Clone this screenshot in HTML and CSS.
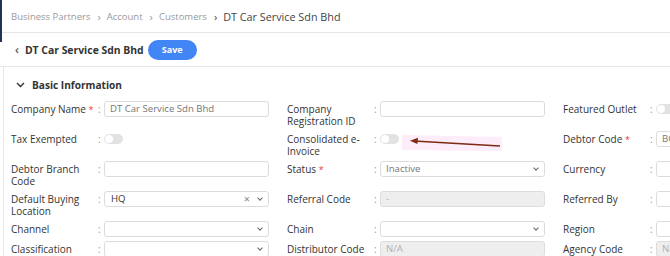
FILE: index.html
```html
<!DOCTYPE html>
<html lang="en">
<head>
  <meta charset="utf-8">
  <title>DT Car Service Sdn Bhd</title>
  <link rel="stylesheet" href="styles.css">
</head>
<body>
  <div class="page">
    <nav class="crumbs">
      <span>Business Partners</span><span class="sep">›</span>
      <span>Account</span><span class="sep">›</span>
      <span>Customers</span><span class="sep dark">›</span>
      <span class="current">DT Car Service Sdn Bhd</span>
    </nav>

    <div class="titlebar">
      <span class="back">‹</span>
      <h1>DT Car Service Sdn Bhd</h1>
      <button class="btn">Save</button>
    </div>

    <section class="card">
      <h2 class="section-title">
        <svg width="9" height="6" viewBox="0 0 9 6"><path d="M1 1l3.5 3.5L8 1" fill="none" stroke="#333" stroke-width="1.4"/></svg>
        Basic Information
      </h2>

      <div class="fields">
        <div class="field"><label class="req">Company Name <i>*</i></label><span class="colon">:</span><div class="input">DT Car Service Sdn Bhd</div></div>
        <div class="field"><label>Company Registration ID</label><span class="colon">:</span><div class="input"></div></div>
        <div class="field"><label>Featured Outlet</label><span class="colon">:</span><div><span class="toggle"></span></div></div>

        <div class="field"><label>Tax Exempted</label><span class="colon">:</span><div><span class="toggle"></span></div></div>
        <div class="field"><label>Consolidated e&#8209;<br>Invoice</label><span class="colon">:</span><div><span class="toggle"></span></div></div>
        <div class="field"><label class="req">Debtor Code <i>*</i></label><span class="colon">:</span><div class="input">BC</div></div>

        <div class="field"><label>Debtor Branch Code</label><span class="colon">:</span><div class="input"></div></div>
        <div class="field"><label class="req">Status <i>*</i></label><span class="colon">:</span><div class="input select">Inactive<span class="caret"></span></div></div>
        <div class="field"><label>Currency</label><span class="colon">:</span><div class="input"></div></div>

        <div class="field"><label>Default Buying Location</label><span class="colon">:</span><div class="input select dark">HQ<span class="clear">×</span><span class="caret"></span></div></div>
        <div class="field"><label>Referral Code</label><span class="colon">:</span><div class="input disabled">-</div></div>
        <div class="field"><label>Referred By</label><span class="colon">:</span><div class="input"></div></div>

        <div class="field"><label>Channel</label><span class="colon">:</span><div class="input select"><span class="caret"></span></div></div>
        <div class="field"><label>Chain</label><span class="colon">:</span><div class="input select"><span class="caret"></span></div></div>
        <div class="field"><label>Region</label><span class="colon">:</span><div class="input"></div></div>

        <div class="field"><label>Classification</label><span class="colon">:</span><div class="input select"><span class="caret"></span></div></div>
        <div class="field"><label>Distributor Code</label><span class="colon">:</span><div class="input disabled">N/A</div></div>
        <div class="field"><label>Agency Code</label><span class="colon">:</span><div class="input disabled">N/A</div></div>
      </div>
    </section>

    <!-- annotation arrow drawn over the form -->
    <svg class="annotation" width="110" height="24" viewBox="0 0 110 24">
      <path d="M0 3 L100 5 L100 19 L0 18 Z" fill="#fdeaf8" opacity=".9"/>
      <path d="M98 14 L12 9" stroke="#7c2a12" stroke-width="1.6" fill="none"/>
      <path d="M8 8.8 L16 5.8 L15.4 12 Z" fill="#7c2a12"/>
    </svg>
  </div>
</body>
</html>
```

FILE: styles.css
```css
:root {
  --text: #333;
  --muted: #9a9a9a;
  --line: #e6e6e6;
  --accent: #4285f4;
  --navy: #1f3553;
}
* { box-sizing: border-box; margin: 0; padding: 0; }
html, body { overflow: hidden; }
body {
  font-family: 'Open Sans', sans-serif;
  font-size: 10px;
  color: var(--text);
  background: #fff;
}
.page {
  position: relative;
  width: 900px;
}
/* dark edge of the collapsed sidebar */
.page::before {
  content: '';
  position: absolute;
  left: 0; top: 0;
  width: 2px; height: 42px;
  background: var(--navy);
}
.crumbs {
  height: 33px;
  display: flex;
  align-items: center;
  padding-left: 11px;
  border-bottom: 1px solid var(--line);
  color: var(--muted);
  font-size: 9.5px;
}
.crumbs .sep {
  margin: 0 6px 0 7px;
  font-size: 11px;
}
.crumbs .sep.dark { color: #444; }
.crumbs .current {
  color: #444;
  font-size: 10.8px;
}
.titlebar {
  height: 34px;
  display: flex;
  align-items: center;
  padding-left: 15px;
  border-bottom: 1px solid var(--line);
}
.back {
  font-size: 13px;
  margin-right: 6px;
  margin-top: -2px;
}
.titlebar h1 {
  font-size: 10.4px;
  font-weight: 700;
  margin-right: 4px;
}
.btn {
  font-family: inherit;
  font-size: 9px;
  font-weight: 700;
  color: #fff;
  background: var(--accent);
  border: 0;
  border-radius: 10px;
  width: 49px;
  height: 20px;
}
.card {
  margin-left: 3px;
  border-left: 1px solid var(--line);
  padding-top: 10px;
}
.section-title {
  display: flex;
  align-items: center;
  gap: 7px;
  padding-left: 12px;
  font-size: 10.1px;
  font-weight: 700;
  height: 16px;
  margin-bottom: 8px;
}
.fields {
  display: grid;
  grid-template-columns: repeat(3, 258px);
  column-gap: 18px;
  row-gap: 4px;
  padding-left: 7px;
}
.field {
  display: grid;
  grid-template-columns: 87px 6px 1fr;
  align-items: start;
}
.field label {
  line-height: 12px;
  padding-top: 2px;
  padding-right: 2px;
}
.field label.req { white-space: nowrap; }
.field label i {
  font-style: normal;
  color: #e53935;
  font-size: 9px;
}
.colon {
  color: var(--muted);
  line-height: 12px;
  padding-top: 2px;
}
.input {
  position: relative;
  height: 16px;
  border: 1px solid #dcdcdc;
  border-radius: 3px;
  padding-left: 5px;
  line-height: 14px;
  color: #777;
  font-size: 9.6px;
}
.input.dark { color: #333; padding-left: 6px; }
.input.disabled {
  background: #eee;
  color: #b0b0b0;
}
.caret {
  position: absolute;
  right: 6px; top: 4px;
  width: 4px; height: 4px;
  border-right: 1px solid #666;
  border-bottom: 1px solid #666;
  transform: rotate(45deg);
}
.clear {
  position: absolute;
  right: 18px; top: 0;
  color: #888;
  font-size: 11px;
}
.toggle {
  display: inline-block;
  margin-top: 3px;
  width: 19px; height: 10px;
  border-radius: 5px;
  background: #e2e2e2;
  position: relative;
}
.toggle::after {
  content: '';
  position: absolute;
  left: 1px; top: 1px;
  width: 8px; height: 8px;
  border-radius: 50%;
  background: #fff;
}
.annotation {
  position: absolute;
  left: 402px; top: 132px;
}
```
